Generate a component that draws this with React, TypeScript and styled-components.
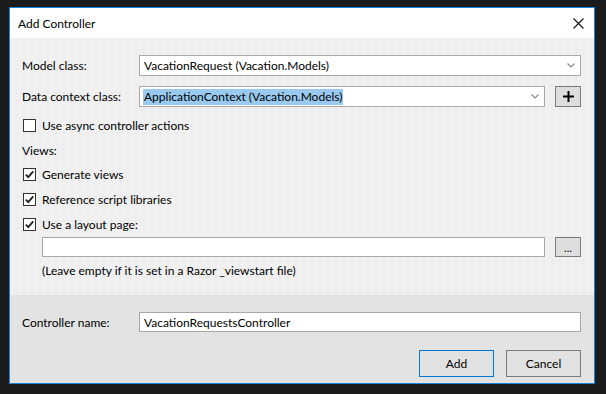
import React from 'react';
import styled, { createGlobalStyle } from 'styled-components';

const GlobalStyle = createGlobalStyle`
  html, body {
    margin: 0;
    padding: 0;
    background: #1b1b1b;
  }
  body {
    font-family: Lato, 'Noto Sans', sans-serif;
    font-size: 12px;
    color: #000000;
  }
`;

const Window = styled.div`
  box-sizing: border-box;
  width: 586px;
  height: 377px;
  margin: 7px 0 0 9px;
  border: 1px solid #1883d7;
  display: flex;
  flex-direction: column;
  background: #ffffff;
`;

const TitleBar = styled.div`
  height: 30px;
  display: flex;
  align-items: center;
  justify-content: space-between;
  padding: 0 10px 0 8px;
  background: #ffffff;
`;

const Title = styled.span`
  font-size: 12px;
`;

const Body = styled.div`
  flex: 1;
  display: flex;
  flex-direction: column;
  padding: 17px 13px 0 12px;
  background-color: #f0f0f0;
  background-image: radial-gradient(circle, #e4e4e4 0.6px, transparent 1px);
  background-size: 8px 8px;
  background-position: 2px 3px;
`;

const Footer = styled.div`
  height: 88px;
  box-sizing: border-box;
  display: flex;
  flex-direction: column;
  padding: 17px 13px 0 12px;
  background: #e3e3e3;
`;

const FieldRow = styled.div<{ $gap?: number }>`
  display: flex;
  align-items: center;
  margin-top: ${p => p.$gap ?? 0}px;
`;

const Label = styled.label`
  width: 117px;
  flex: none;
`;

const Combo = styled.div`
  box-sizing: border-box;
  height: 21px;
  flex: 1;
  display: flex;
  align-items: center;
  justify-content: space-between;
  padding: 0 5px 0 3px;
  background: #ffffff;
  border: 1px solid #a8a8a8;
`;

const Selected = styled.span<{ $highlight?: boolean }>`
  padding: 0 1px;
  line-height: 16px;
  background: ${p => (p.$highlight ? '#99c9ef' : 'transparent')};
`;

const TextInput = styled.div`
  box-sizing: border-box;
  height: 20px;
  flex: 1;
  display: flex;
  align-items: center;
  padding: 0 4px;
  background: #ffffff;
  border: 1px solid #a8a8a8;
`;

const SmallButton = styled.div<{ $height?: number }>`
  box-sizing: border-box;
  width: 26px;
  height: ${p => p.$height ?? 21}px;
  margin-left: 10px;
  display: flex;
  align-items: center;
  justify-content: center;
  background: #dedede;
  border: 1px solid #7a7a7a;
  font-size: 11px;
`;

const CheckRow = styled.div<{ $gap: number }>`
  display: flex;
  align-items: center;
  height: 13px;
  margin-top: ${p => p.$gap}px;
  margin-left: 1px;
`;

const Box = styled.div`
  box-sizing: border-box;
  width: 13px;
  height: 13px;
  flex: none;
  display: flex;
  align-items: center;
  justify-content: center;
  background: #ffffff;
  border: 1px solid #333333;
  margin-right: 6px;
`;

const SectionLabel = styled.div<{ $gap: number }>`
  line-height: 16px;
  margin-top: ${p => p.$gap}px;
`;

const Indented = styled.div<{ $gap: number }>`
  display: flex;
  align-items: center;
  margin: ${p => p.$gap}px 0 0 20px;
`;

const Hint = styled.div`
  line-height: 16px;
  margin: 6px 0 0 20px;
`;

const Actions = styled.div`
  display: flex;
  justify-content: flex-end;
  gap: 12px;
  margin-top: 18px;
`;

const DialogButton = styled.div<{ $primary?: boolean }>`
  box-sizing: border-box;
  width: 75px;
  height: 27px;
  display: flex;
  align-items: center;
  justify-content: center;
  background: #e1e1e1;
  border: 1px solid ${p => (p.$primary ? '#0078d7' : '#7a7a7a')};
`;

const Chevron = () => (
  <svg width="8" height="5" viewBox="0 0 8 5">
    <path d="M0.5 0.5 L4 4 L7.5 0.5" fill="none" stroke="#8a8a8a" strokeWidth="1.2" />
  </svg>
);

const Tick = () => (
  <svg width="11" height="11" viewBox="0 0 11 11">
    <path d="M1.8 5.6 L4.3 8.2 L9.2 2.4" fill="none" stroke="#222" strokeWidth="1.8" />
  </svg>
);

const CloseIcon = () => (
  <svg width="11" height="11" viewBox="0 0 11 11">
    <path d="M0.5 0.5 L10.5 10.5 M10.5 0.5 L0.5 10.5" stroke="#111" strokeWidth="1.1" />
  </svg>
);

const PlusIcon = () => (
  <svg width="11" height="11" viewBox="0 0 11 11">
    <path d="M5.5 0 V11 M0 5.5 H11" stroke="#000" strokeWidth="2" />
  </svg>
);

interface CheckProps {
  checked?: boolean;
  gap: number;
  children: React.ReactNode;
}

function Check({ checked, gap, children }: CheckProps) {
  return (
    <CheckRow $gap={gap}>
      <Box>{checked && <Tick />}</Box>
      <span>{children}</span>
    </CheckRow>
  );
}

export default function App() {
  return (
    <>
      <GlobalStyle />
      <Window>
        <TitleBar>
          <Title>Add Controller</Title>
          <CloseIcon />
        </TitleBar>
        <Body>
          <FieldRow>
            <Label>Model class:</Label>
            <Combo>
              <Selected>VacationRequest (Vacation.Models)</Selected>
              <Chevron />
            </Combo>
          </FieldRow>
          <FieldRow $gap={10}>
            <Label>Data context class:</Label>
            <Combo>
              <Selected $highlight>ApplicationContext (Vacation.Models)</Selected>
              <Chevron />
            </Combo>
            <SmallButton>
              <PlusIcon />
            </SmallButton>
          </FieldRow>
          <Check gap={12}>Use async controller actions</Check>
          <SectionLabel $gap={11}>Views:</SectionLabel>
          <Check checked gap={9}>Generate views</Check>
          <Check checked gap={12}>Reference script libraries</Check>
          <Check checked gap={12}>Use a layout page:</Check>
          <Indented $gap={6}>
            <TextInput />
            <SmallButton $height={20}>...</SmallButton>
          </Indented>
          <Hint>(Leave empty if it is set in a Razor _viewstart file)</Hint>
        </Body>
        <Footer>
          <FieldRow>
            <Label>Controller name:</Label>
            <TextInput>VacationRequestsController</TextInput>
          </FieldRow>
          <Actions>
            <DialogButton $primary>Add</DialogButton>
            <DialogButton>Cancel</DialogButton>
          </Actions>
        </Footer>
      </Window>
    </>
  );
}
